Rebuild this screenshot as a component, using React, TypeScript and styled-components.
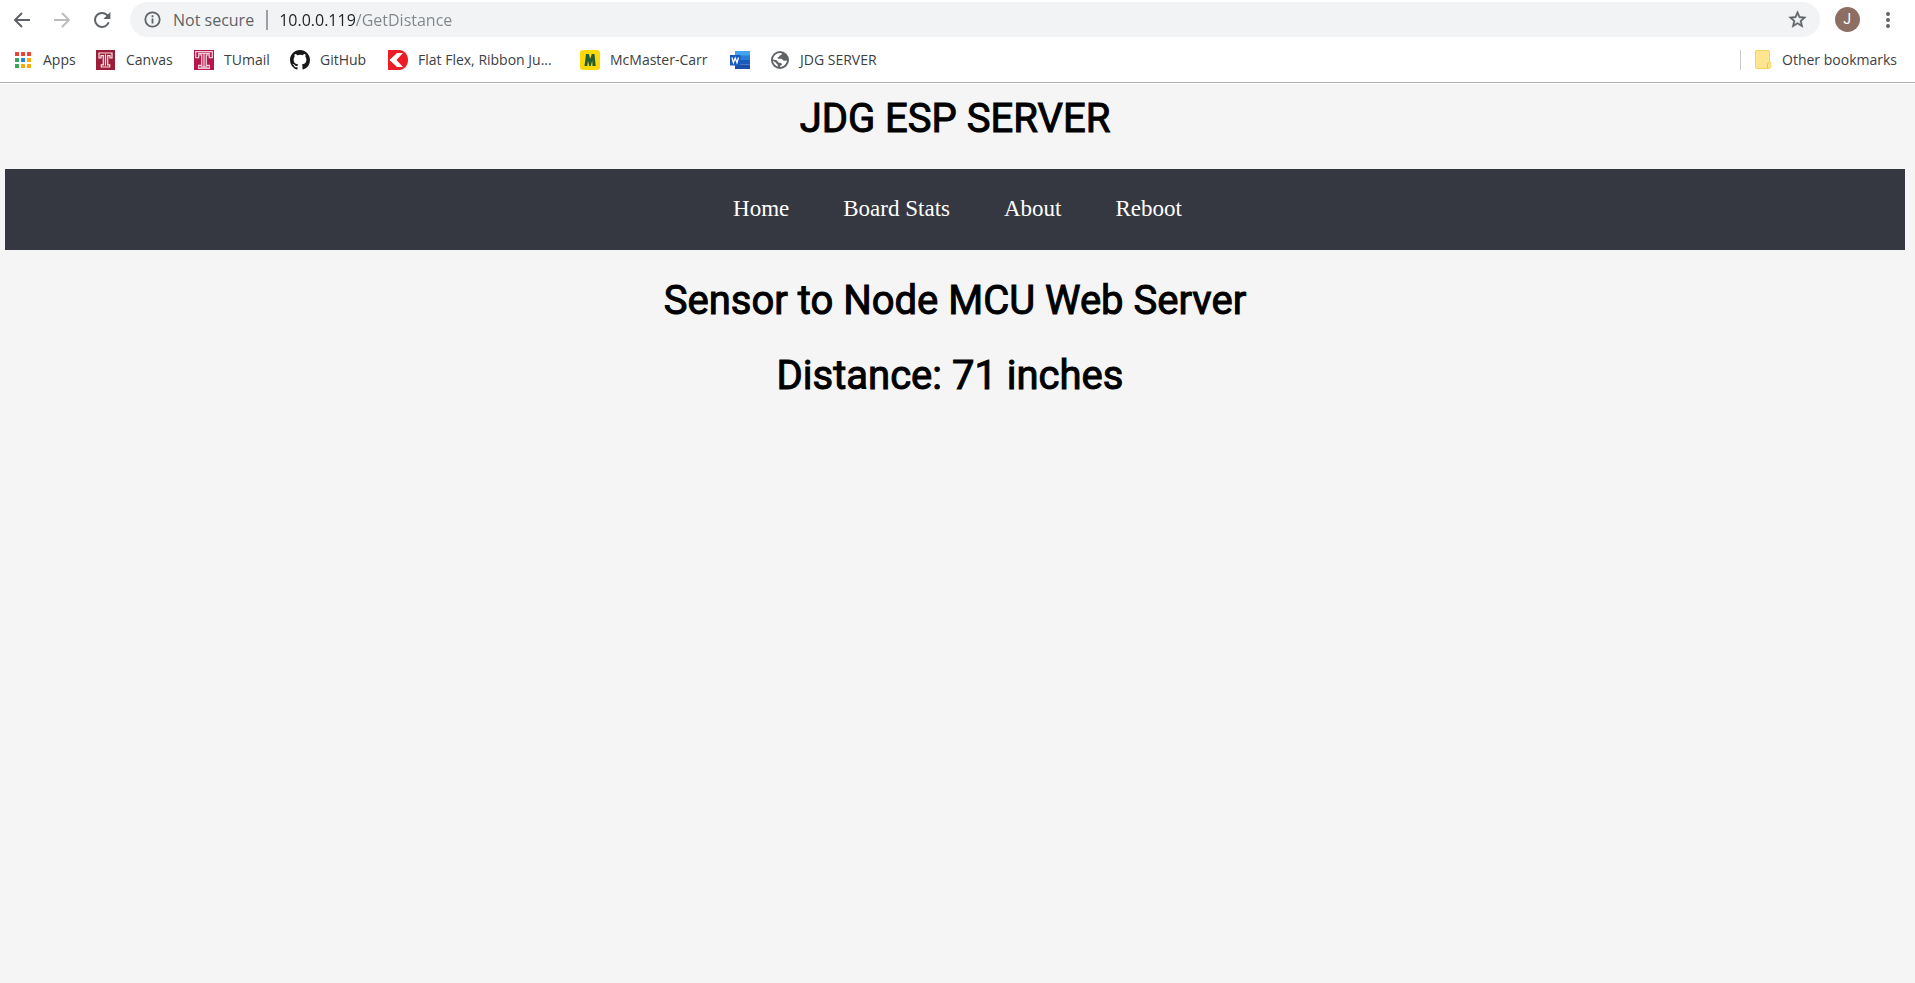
import React from "react";
import styled, { createGlobalStyle } from "styled-components";

const GlobalStyle = createGlobalStyle`
  * { box-sizing: border-box; }
  body { margin: 0; background: #f5f5f5; }
`;

const uiFont = `"Open Sans", "Noto Sans", sans-serif`;

const Browser = styled.header`
  background: #fff;
  border-bottom: 1px solid #b0b0b0;
  box-shadow: 0 1px #fff;
  font-family: ${uiFont};
`;

const Toolbar = styled.div`
  display: flex;
  align-items: center;
  height: 39px;
  padding: 0 13px 0 6px;
`;

const IconButton = styled.button<{ $width?: number }>`
  display: flex;
  align-items: center;
  justify-content: center;
  flex: none;
  width: ${(p) => p.$width ?? 40}px;
  height: 32px;
  padding: 0;
  border: 0;
  background: none;
  color: #5f6368;
  font: inherit;
  &:disabled { color: #babcbe; }
`;

const NavButtons = styled.div`
  display: flex;
  gap: 8px;
  margin-right: 12px;
`;

const AddressBar = styled.form`
  display: flex;
  align-items: center;
  flex: 1;
  height: 35px;
  padding: 0 7px 0 14px;
  border-radius: 18px;
  background: #f1f3f4;
`;

const SiteInfo = styled.button`
  display: flex;
  align-items: center;
  gap: 12px;
  padding: 0 12px 0 0;
  border: 0;
  border-right: 2px solid #9aa0a6;
  background: none;
  color: #5f6368;
  font: 16px/20px ${uiFont};
  white-space: nowrap;
`;

/* The host is dark and the path after it is grey, inside one editable field. */
const UrlInput = styled.input`
  flex: 1;
  min-width: 0;
  height: 24px;
  margin-left: 11px;
  padding: 0;
  border: 0;
  outline: 0;
  font: 16px/24px ${uiFont};
  color: transparent;
  caret-color: #202124;
  background: linear-gradient(to right, #202124 77px, #80868b 77px);
  -webkit-background-clip: text;
  background-clip: text;
`;

const Avatar = styled.span`
  display: flex;
  align-items: center;
  justify-content: center;
  width: 25px;
  height: 25px;
  border-radius: 50%;
  background: #8d6e63;
  color: #fff;
  font: 14px/25px Roboto, sans-serif;
`;

const BookmarkBar = styled.nav`
  display: flex;
  align-items: center;
  height: 43px;
  padding: 0 18px 2px 13px;
`;

const Bookmark = styled.a<{ $width?: number }>`
  display: flex;
  align-items: center;
  gap: 10px;
  flex: none;
  width: ${(p) => (p.$width ? `${p.$width}px` : "auto")};
  color: #3c4043;
  font-size: 14px;
  line-height: 20px;
  text-decoration: none;
  white-space: nowrap;
  svg { flex: none; }
`;

const OtherBookmarks = styled.div`
  margin-left: auto;
  padding: 0 0 0 14px;
  border-left: 1px solid #c8cace;
`;

const Page = styled.main`
  padding: 11px 10px 0 5px;
  text-align: center;
`;

const Heading = styled.h1`
  margin: 0 0 26px;
  color: #000;
  font: 400 40px/49px Roboto, sans-serif;
  -webkit-text-stroke: 1px #000;
`;

const Menu = styled.nav`
  display: flex;
  align-items: center;
  justify-content: center;
  gap: 54px;
  height: 81px;
  margin-bottom: 26px;
  padding: 0 0 2px 5px;
  background: #363841;
`;

const MenuLink = styled.a`
  color: #fff;
  font: 23px/27px "Liberation Serif", serif;
  text-decoration: none;
`;

const BackIcon = () => (
  <svg width="18" height="16" viewBox="0 0 18 16" fill="none" stroke="currentColor" strokeWidth="2">
    <path d="M17 8H2M9 1L2 8l7 7" />
  </svg>
);
const ForwardIcon = () => (
  <svg width="18" height="16" viewBox="0 0 18 16" fill="none" stroke="currentColor" strokeWidth="2">
    <path d="M1 8h15M9 1l7 7-7 7" />
  </svg>
);
const ReloadIcon = () => (
  <svg width="18" height="18" viewBox="0 0 18 18">
    <path d="M14.2 13.6A7 7 0 1 1 14 4l.6.7M15.6 11.2a7 7 0 0 1-1.4 2.4" fill="none" stroke="currentColor" strokeWidth="2" />
    <path d="M17.4 1v7h-7z" fill="currentColor" />
  </svg>
);
const InfoIcon = () => (
  <svg width="17" height="17" viewBox="0 0 17 17">
    <circle cx="8.500" cy="8.500" r="7.200" fill="none" stroke="currentColor" strokeWidth="1.800" />
    <path d="M7.600 7.500h1.800v5H7.600zM7.600 4.300h1.800v1.900H7.600z" fill="currentColor" />
  </svg>
);
const StarIcon = () => (
  <svg width="21" height="21" viewBox="0 0 24 24" fill="currentColor">
    <path stroke="currentColor" strokeWidth=".500" d="M22 9.240l-7.190-.620L12 2 9.190 8.630 2 9.240l5.460 4.730L5.820 21 12 17.270 18.180 21l-1.630-7.030L22 9.240zM12 15.400l-3.760 2.270 1-4.280-3.320-2.880 4.380-.380L12 6.100l1.710 4.040 4.380.380-3.320 2.880 1 4.280L12 15.400z" />
  </svg>
);
const KebabIcon = () => (
  <svg width="6" height="18" viewBox="0 0 6 18" fill="currentColor">
    <circle cx="3" cy="3" r="2" /><circle cx="3" cy="9" r="2" /><circle cx="3" cy="15" r="2" />
  </svg>
);

const appColors = ["#ea4335", "#ea4335", "#ea4335", "#34a853", "#1e88e5", "#fbab00", "#34a853", "#fbab00", "#fbab00"];
const AppsIcon = () => (
  <svg width="20" height="20" viewBox="0 0 20 20">
    {appColors.map((c, i) => (
      <rect key={i} x={2 + (i % 3) * 6} y={2 + Math.floor(i / 3) * 6} width="4" height="4" rx=".500" fill={c} />
    ))}
  </svg>
);
const TempleIcon = ({ color, tint, wide }: { color: string; tint: string; wide?: boolean }) => (
  <svg width="20" height="20" viewBox="0 0 20 20">
    <rect width={wide ? 20 : 19} height="20" fill={color} />
    {wide ? (
      <g fill="none" stroke={tint} strokeWidth="1.300">
        <path d="M1.700 7.700V1.700h16.600v6h-3V4.900h-3v10.500h3v2.900H4.700v-2.900h3V4.900h-3v2.800z" />
        <path d="M4 3.300h12M10 3.300V17M6.500 17h7" />
      </g>
    ) : (
      <g fill="none" stroke={tint} strokeWidth="1.200">
        <path d="M3 8V3h13v5h-2V5.600h-2.300v9.200h2V17H5.300v-2.200h2V5.600H5V8z" />
        <path d="M9.500 4.300v11.400" />
      </g>
    )}
  </svg>
);
const GitHubIcon = () => (
  <svg width="20" height="20" viewBox="0 0 16 16" fill="#191717">
    <path d="M8 0C3.580 0 0 3.580 0 8c0 3.540 2.290 6.530 5.470 7.590.400.070.550-.170.550-.380 0-.190-.010-.820-.010-1.490-2.010.370-2.530-.490-2.690-.940-.090-.230-.480-.940-.820-1.130-.280-.150-.680-.520-.010-.530.630-.010 1.080.580 1.230.820.720 1.210 1.870.870 2.330.660.070-.520.280-.870.510-1.070-1.780-.200-3.640-.890-3.640-3.950 0-.870.310-1.590.820-2.150-.080-.200-.360-1.020.080-2.120 0 0 .670-.210 2.200.820A7.600 7.600 0 0 1 8 3.860c.680 0 1.360.090 2 .270 1.530-1.040 2.200-.820 2.200-.820.440 1.100.160 1.920.080 2.120.510.560.820 1.270.820 2.150 0 3.070-1.870 3.750-3.650 3.950.290.250.540.730.540 1.480 0 1.070-.010 1.930-.010 2.200 0 .210.150.460.550.380A8.010 8.010 0 0 0 16 8c0-4.420-3.580-8-8-8z" />
  </svg>
);
const DigiKeyIcon = () => (
  <svg width="20" height="20" viewBox="0 0 20 20">
    <path d="M0 0h12c5 1 8 5 8 10s-3 9-8 10H0z" fill="#ec1c24" />
    <path d="M9 3h6L8.500 10l6.500 7H9L1.500 10z" fill="#fff" />
  </svg>
);
const McMasterIcon = () => (
  <svg width="20" height="20" viewBox="0 0 20 20">
    <rect width="20" height="20" rx="3" fill="#fbd90b" />
    <path d="M4.500 16L6 4h2.800l1.400 5 1.600-5h2.700L15.700 16h-3.200l-.3-5.500L10.800 16H9.200l-1.300-5.500L7.300 16z" fill="#215c37" />
  </svg>
);
const WordIcon = () => (
  <svg width="20" height="20" viewBox="0 0 20 20">
    <rect x="5" y="1" width="15" height="5" fill="#41a5ee" />
    <rect x="5" y="5.500" width="15" height="4.500" fill="#2b7cd3" />
    <rect x="5" y="10" width="15" height="4.500" fill="#185abd" />
    <rect x="5" y="14.500" width="15" height="4.500" fill="#1a50a8" />
    <rect y="5" width="10.500" height="10.500" fill="#185abd" />
    <path d="M2 7.500l1.400 5.200L5.200 8l1.800 4.700 1.500-5.200" fill="none" stroke="#fff" strokeWidth="1.300" />
  </svg>
);
const GlobeIcon = () => (
  <svg width="20" height="20" viewBox="0 0 20 20">
    <circle cx="10" cy="10" r="9" fill="#5f6368" />
    <path d="M11.800 3.200c.300 1-.3 1.900-1.500 2.100-1.300.2-.7 1.500-1.600 1.800-1.500.300-1.500 1.300-.4 1.600l3.100.1c1.200.2 1.100 1.500 2.500 1.900 1.400.300 2.600.200 3.100-.400-.3 3.400-3.100 6.500-6.900 6.700-.5-.9.100-1.500 1.100-1.800.9-.3.900-1.200.4-1.700-.8-.8-3.400-.3-3.800-1.700-.3-1.200-1-1.800-2.300-1.900L3 9.600C3.100 5.800 6.200 2.800 10 2.900z" fill="#fff" />
    <path d="M3 10.500l2.200 1.700c.9.300.8 1.200 1.600 1.500.9.300 1 1.800 1.100 3C5.300 15.900 3.300 13.600 3 10.500z" fill="#fff" />
  </svg>
);
const FolderIcon = () => (
  <svg width="17" height="19" viewBox="0 0 17 19">
    <path d="M1 .500h13l.5.500v11.500h1.300v5l-1 1H1l-.5-.5V1z" fill="#ffe58f" stroke="#f6d365" />
    <path d="M12.500 18v-4.500l2-1" fill="none" stroke="#ecc44a" />
  </svg>
);

const bookmarks = [
  { label: "Apps", width: 83, icon: <AppsIcon /> },
  { label: "Canvas", width: 98, icon: <TempleIcon color="#9d1c37" tint="#f8e6ea" /> },
  { label: "TUmail", width: 96, icon: <TempleIcon color="#b5174b" tint="#f1c9d6" wide /> },
  { label: "GitHub", width: 98, icon: <GitHubIcon /> },
  { label: "Flat Flex, Ribbon Ju...", width: 192, icon: <DigiKeyIcon /> },
  { label: "McMaster-Carr", width: 150, icon: <McMasterIcon /> },
  { label: "", width: 40, icon: <WordIcon /> },
  { label: "JDG SERVER", width: 120, icon: <GlobeIcon /> },
];

const menu = ["Home", "Board Stats", "About", "Reboot"];

export default function App() {
  return (
    <>
      <GlobalStyle />
      <Browser>
        <Toolbar>
          <NavButtons>
            <IconButton $width={32} aria-label="Back"><BackIcon /></IconButton>
            <IconButton $width={32} aria-label="Forward" disabled><ForwardIcon /></IconButton>
            <IconButton $width={32} aria-label="Reload"><ReloadIcon /></IconButton>
          </NavButtons>
          <AddressBar onSubmit={(e) => e.preventDefault()}>
            <SiteInfo type="button"><InfoIcon />Not secure</SiteInfo>
            <UrlInput aria-label="Address" defaultValue="10.0.0.119/GetDistance" spellCheck={false} />
            <IconButton type="button" $width={32} aria-label="Bookmark this page"><StarIcon /></IconButton>
          </AddressBar>
          <IconButton $width={54} aria-label="Profile"><Avatar>J</Avatar></IconButton>
          <IconButton $width={28} aria-label="Browser menu"><KebabIcon /></IconButton>
        </Toolbar>
        <BookmarkBar aria-label="Bookmarks">
          {bookmarks.map((b) => (
            <Bookmark key={b.label} href="#" $width={b.width} aria-label={b.label || "Word"}>
              {b.icon}
              {b.label}
            </Bookmark>
          ))}
          <OtherBookmarks>
            <Bookmark href="#"><FolderIcon />Other bookmarks</Bookmark>
          </OtherBookmarks>
        </BookmarkBar>
      </Browser>
      <Page>
        <Heading>JDG ESP SERVER</Heading>
        <Menu aria-label="Site">
          {menu.map((m) => <MenuLink key={m} href="#">{m}</MenuLink>)}
        </Menu>
        <Heading as="h2">Sensor to Node MCU Web Server</Heading>
        <Heading as="h2">Distance: 71 inches&nbsp;</Heading>
      </Page>
    </>
  );
}
